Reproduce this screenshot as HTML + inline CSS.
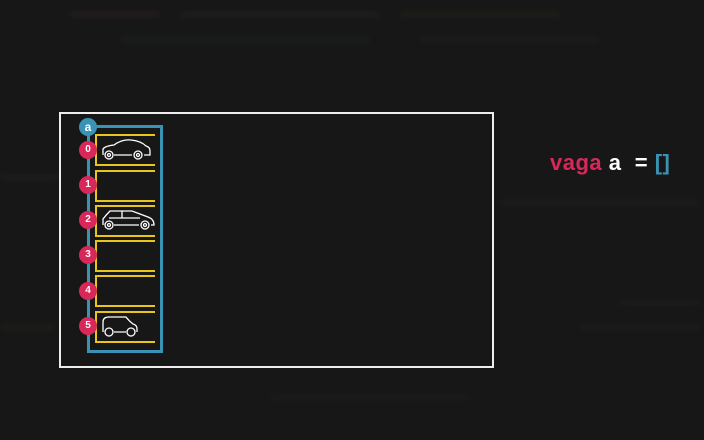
<!DOCTYPE html>
<html><head><style>
html,body{margin:0;padding:0;}
body{width:704px;height:440px;background:#171717;position:relative;overflow:hidden;font-family:"Liberation Sans",sans-serif;}
.bl{position:absolute;height:5px;border-radius:3px;filter:blur(3px);opacity:.4}
.c{position:absolute;width:18px;height:18px;border-radius:50%;background:#d8285a;color:#fff;font-weight:bold;font-size:10px;text-align:center;line-height:18px;}
.s{position:absolute;left:95px;width:58px;height:28px;border:2px solid #e7c51d;border-right:none;}
</style></head><body>
<div class="bl" style="left:70px;top:12px;width:90px;background:#3a2a2e"></div>
<div class="bl" style="left:180px;top:12px;width:200px;background:#2c2c2c"></div>
<div class="bl" style="left:400px;top:12px;width:160px;background:#2e2b22"></div>
<div class="bl" style="left:120px;top:37px;width:250px;background:#262a30"></div>
<div class="bl" style="left:420px;top:37px;width:180px;background:#262626"></div>
<div class="bl" style="left:0px;top:175px;width:60px;background:#2a2a26"></div>
<div class="bl" style="left:500px;top:200px;width:200px;background:#262626"></div>
<div class="bl" style="left:0px;top:325px;width:55px;background:#302a20"></div>
<div class="bl" style="left:580px;top:325px;width:120px;background:#272727"></div>
<div class="bl" style="left:620px;top:300px;width:80px;background:#2a2622"></div>
<div class="bl" style="left:270px;top:395px;width:200px;background:#232323"></div>
<div style="position:absolute;left:59px;top:112px;width:431px;height:252px;border:2px solid #eee;"></div>
<div style="position:absolute;left:87px;top:125px;width:70px;height:222px;border:3px solid #3a93b4;"></div>
<div class="s" style="top:134px"></div>
<div class="s" style="top:170px"></div>
<div class="s" style="top:205px"></div>
<div class="s" style="top:240px"></div>
<div class="s" style="top:275px"></div>
<div class="s" style="top:311px"></div>
<div class="c" style="left:79px;top:118px;background:#3a93b4;font-size:12px">a</div>
<div class="c" style="left:79px;top:141px">0</div>
<div class="c" style="left:79px;top:176px">1</div>
<div class="c" style="left:79px;top:211px">2</div>
<div class="c" style="left:79px;top:246px">3</div>
<div class="c" style="left:79px;top:282px">4</div>
<div class="c" style="left:79px;top:317px">5</div>
<svg style="position:absolute;left:100px;top:138px" width="55" height="26" fill="none" stroke="#fff" stroke-width="1.3">
<path d="M3 17 L3 11 Q5 8 14 7 Q22 1 31 2 Q41 3 46 8 Q50 9 50 13 L50 17 L44 17 M14 17 L32 17"/>
<circle cx="9" cy="17" r="4"/><circle cx="38" cy="17" r="4"/><circle cx="9" cy="17" r="1.5"/><circle cx="38" cy="17" r="1.5"/></svg>
<svg style="position:absolute;left:100px;top:208px" width="58" height="26" fill="none" stroke="#fff" stroke-width="1.3">
<path d="M3 17 L3 11 Q6 7 10 3 L32 3 Q40 6 48 9 Q54 11 54 17 L51 17 M14 17 L39 17 M9 10 L40 10 M22 3 L22 10"/>
<circle cx="9" cy="17" r="4"/><circle cx="45" cy="17" r="4"/><circle cx="9" cy="17" r="1.5"/><circle cx="45" cy="17" r="1.5"/></svg>
<svg style="position:absolute;left:100px;top:313px" width="40" height="26" fill="none" stroke="#fff" stroke-width="1.3">
<path d="M3 19 L3 9 Q3 4 9 4 L26 4 Q29 8 33 11 Q37 12 37 16 L37 19 M14 19 L26 19"/>
<circle cx="9" cy="19" r="4"/><circle cx="31" cy="19" r="4"/></svg>
<div style="position:absolute;left:550px;top:150px;font-size:22px;font-weight:bold;white-space:pre;color:#fff;letter-spacing:0.5px"><span style="color:#d8285a">vaga</span> a  = <span style="color:#3a93b4">[]</span></div>
</body></html>
